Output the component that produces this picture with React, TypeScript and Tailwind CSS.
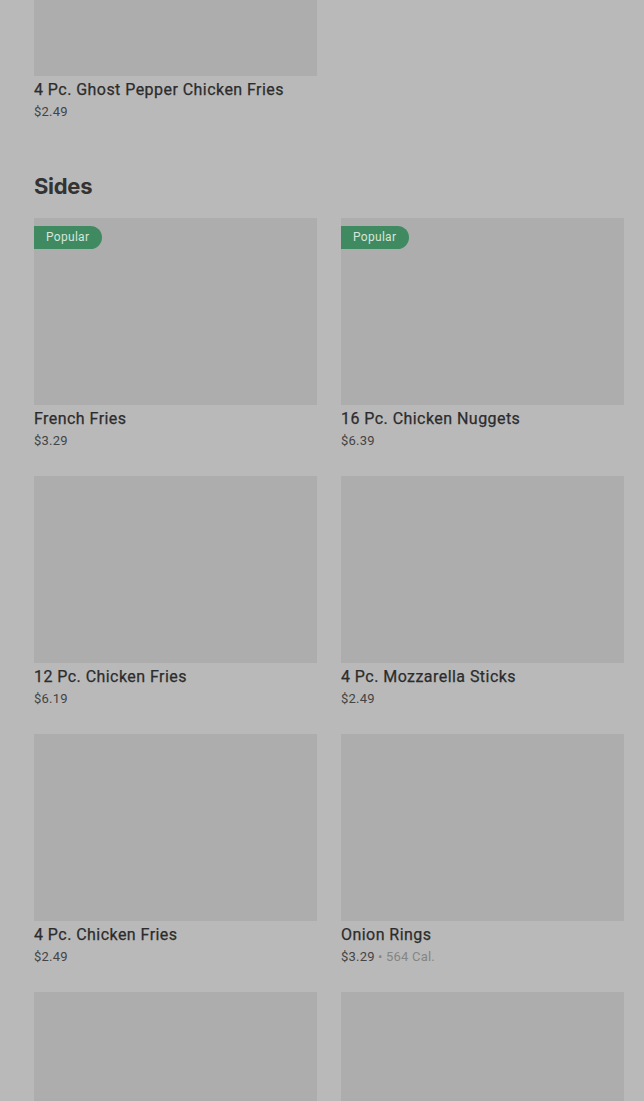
interface MenuItem {
  name: string;
  price: string;
  calories?: string;
  popular?: boolean;
}

const sides: MenuItem[] = [
  { name: "French Fries", price: "$3.29", popular: true },
  { name: "16 Pc. Chicken Nuggets", price: "$6.39", popular: true },
  { name: "12 Pc. Chicken Fries", price: "$6.19" },
  { name: "4 Pc. Mozzarella Sticks", price: "$2.49" },
  { name: "4 Pc. Chicken Fries", price: "$2.49" },
  { name: "Onion Rings", price: "$3.29", calories: "564 Cal." },
  { name: "", price: "" },
  { name: "", price: "" },
];

function ItemCard({ item }: { item: MenuItem }) {
  return (
    <div className="flex flex-col">
      <div className="relative h-[187px] bg-[#adadad]">
        {item.popular && (
          <span className="absolute left-0 top-2 rounded-r-full bg-[#3f8a61] py-[3px] pl-3 pr-[13px] text-[12px] leading-[17px] tracking-[0.3px] text-[#d6e6da]">
            Popular
          </span>
        )}
      </div>

      {item.name && (
        <>
          <div className="mt-1 text-[16px] font-normal leading-5 tracking-[0.45px] text-[#2c2c2c] [-webkit-text-stroke:0.25px_#2c2c2c]">
            {item.name}
          </div>

          <div className="mt-[3px] text-[13px] leading-[18px] tracking-[0.2px] text-[#444444]">
            {item.price}
            {item.calories && (
              <span className="text-[#858585]">
                {" • "}
                {item.calories}
              </span>
            )}
          </div>
        </>
      )}
    </div>
  );
}

export default function App() {
  return (
    <div
      className="h-[1101px] overflow-hidden bg-[#b9b9b9] pl-[34px] pr-[20px]"
      style={{ fontFamily: "Roboto, 'Liberation Sans', sans-serif" }}
    >

      {/* Previous section tail */}

      <div className="grid grid-cols-2 gap-x-6">
        <div className="flex flex-col">
          <div className="h-[76px] bg-[#adadad]" />
          <div className="mt-1 text-[16px] font-normal leading-5 tracking-[0.45px] text-[#2c2c2c] [-webkit-text-stroke:0.25px_#2c2c2c]">
            4 Pc. Ghost Pepper Chicken Fries
          </div>
          <div className="mt-[3px] text-[13px] leading-[18px] tracking-[0.2px] text-[#444444]">
            $2.49
          </div>
        </div>
      </div>

      {/* Sides */}

      <h2 className="mt-[51px] mb-[18px] font-['Inter',sans-serif] text-[22px] font-bold leading-7 tracking-[-0.3px] text-[#333333]">
        Sides
      </h2>

      <div className="grid grid-cols-2 gap-x-6 gap-y-[26px]">
        {sides.map((item, i) => (
          <ItemCard key={i} item={item} />
        ))}
      </div>

    </div>
  );
}
